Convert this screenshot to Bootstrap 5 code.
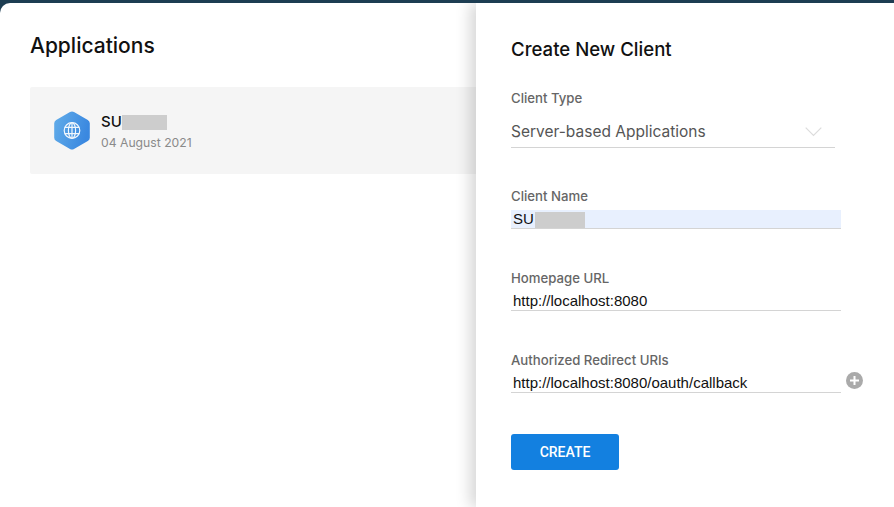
<!DOCTYPE html>
<html lang="en">
<head>
  <meta charset="UTF-8" />
  <meta name="viewport" content="width=device-width, initial-scale=1.0" />
  <title>Create New Client</title>
  <link href="https://cdn.jsdelivr.net/npm/bootstrap@5.3.3/dist/css/bootstrap.min.css" rel="stylesheet" />
  <style>
    html, body { height: 100%; }
    body {
      background: #1d3d52;
      font-family: Inter, "Open Sans", sans-serif;
      overflow: hidden;
    }
    .app-shell {
      height: 100%;
      padding-top: 3px;
    }
    .app-sheet {
      height: 100%;
      background: #fff;
      border-top-left-radius: 10px;
      overflow: hidden;
    }
    .apps-side { padding: 30px 0 0 30px; }
    .apps-title {
      font-size: 21px;
      line-height: 26px;
      font-weight: 500;
      color: #111;
      margin: 0 0 28px;
    }
    .app-item {
      height: 87px;
      background: #f5f5f5;
      padding-left: 24px;
      gap: 11px;
      border-radius: 2px 0 0 2px;
    }
    .app-name {
      font-size: 15px;
      line-height: 18px;
      font-weight: 500;
      color: #111;
      margin-top: 4px;
    }
    .app-date {
      font-size: 12.2px;
      line-height: 18px;
      color: #8a8a8a;
      margin-top: 3px;
    }
    .redact-block {
      display: inline-block;
      width: 45px;
      height: 15px;
      background: #cdcdcd;
      vertical-align: -3px;
    }
    .client-panel {
      width: 418px;
      flex: none;
      background: #fff;
      box-shadow: -6px 0 14px rgba(0, 0, 0, .16);
      padding: 34px 53px 0 35px;
      z-index: 1;
    }
    .panel-title {
      font-size: 18.6px;
      line-height: 24px;
      font-weight: 500;
      color: #111;
      margin: 0 0 30px;
    }
    .field-label {
      display: block;
      font-size: 13.2px;
      line-height: 16px;
      font-weight: 500;
      color: #666;
      margin: -1px 0 0;
    }
    .type-select {
      width: 324px;
      height: 40px;
      margin-top: 2px;
      margin-bottom: 41px;
      padding-top: 8px;
      padding-right: 13px;
      border-bottom: 1px solid #d4d4d4;
      font-size: 15.5px;
      color: #555;
    }
    .url-field {
      position: relative;
      margin-bottom: 42px;
    }
    .url-field-last { margin-bottom: 41px; }
    .url-input {
      display: block;
      width: 330px;
      height: 19px;
      margin-top: 6px;
      padding: 0 2px;
      border: 0;
      border-bottom: 1px solid #d4d4d4;
      border-radius: 0;
      outline: 0;
      background: transparent;
      font-family: "Liberation Sans", Arial, sans-serif;
      font-size: 15px;
      color: #111;
    }
    .url-input-filled { background: #e8f0fe; }
    .input-redact {
      position: absolute;
      left: 24px;
      top: 24px;
      width: 50px;
      height: 16px;
      background: #cdcdcd;
    }
    .add-uri {
      position: absolute;
      left: 335px;
      top: 20px;
      width: 17px;
      height: 17px;
      padding: 0;
      border: 0;
      border-radius: 50%;
      background: #aaa;
    }
    .add-uri svg { display: block; }
    .create-btn {
      width: 108px;
      height: 36px;
      padding: 0;
      background: #1380e0;
      border: 0;
      border-radius: 3px;
      font-family: Roboto, sans-serif;
      font-size: 14px;
      font-weight: 500;
      color: #fff;
    }
    .create-btn:hover { background: #1173ca; color: #fff; }
  </style>
</head>
<body>
  <div class="app-shell">
    <div class="app-sheet d-flex">
      <div class="apps-side flex-grow-1">
        <h1 class="apps-title">Applications</h1>
        <div class="app-item d-flex align-items-center">
          <svg width="36" height="39" viewBox="0 0 36 39" aria-hidden="true">
            <defs>
              <linearGradient id="hexFill" x1="0" y1="0" x2="1" y2="0.3">
                <stop offset="0" stop-color="#62ade9" />
                <stop offset="1" stop-color="#3a88e0" />
              </linearGradient>
            </defs>
            <path d="M16 1a4 4 0 0 1 4 0l13.8 7.9a4 4 0 0 1 2 3.4v14.4a4 4 0 0 1-2 3.4L20 38a4 4 0 0 1-4 0L2.2 30.1a4 4 0 0 1-2-3.4V12.3a4 4 0 0 1 2-3.4z" fill="url(#hexFill)" />
            <g fill="none" stroke="#fff" stroke-width="1.2" opacity=".92">
              <circle cx="18" cy="19.5" r="7.8" />
              <ellipse cx="18" cy="19.5" rx="3.6" ry="7.8" />
              <path d="M10.8 16.4h14.4M10.8 22.6h14.4M18 11.7v15.6" />
            </g>
          </svg>
          <div>
            <div class="app-name">SU<span class="redact-block"></span></div>
            <div class="app-date">04 August 2021</div>
          </div>
        </div>
      </div>

      <div class="client-panel">
        <h2 class="panel-title">Create New Client</h2>
        <form onsubmit="return false">
          <label class="field-label">Client Type</label>
          <div class="type-select d-flex align-items-center justify-content-between">
            <span>Server-based Applications</span>
            <svg width="17" height="10" viewBox="0 0 17 10" aria-hidden="true">
              <path d="M.7.7l7.8 7.8L16.3.7" fill="none" stroke="#dcdcdc" stroke-width="1.2" />
            </svg>
          </div>

          <div class="url-field">
            <label class="field-label" for="clientName">Client Name</label>
            <input class="url-input url-input-filled" id="clientName" type="text" value="SU" />
            <span class="input-redact"></span>
          </div>

          <div class="url-field">
            <label class="field-label" for="homepageUrl">Homepage URL</label>
            <input class="url-input" id="homepageUrl" type="text" value="http://localhost:8080" />
          </div>

          <div class="url-field url-field-last">
            <label class="field-label" for="redirectUri">Authorized Redirect URIs</label>
            <input class="url-input" id="redirectUri" type="text" value="http://localhost:8080/oauth/callback" />
            <button class="add-uri" type="button" aria-label="Add URI">
              <svg width="17" height="17" viewBox="0 0 17 17" aria-hidden="true">
                <path d="M8.5 4v9M4 8.5h9" stroke="#fff" stroke-width="2" />
              </svg>
            </button>
          </div>

          <button class="btn create-btn" type="submit">CREATE</button>
        </form>
      </div>
    </div>
  </div>
  <script src="https://cdn.jsdelivr.net/npm/bootstrap@5.3.3/dist/js/bootstrap.bundle.min.js"></script>
</body>
</html>
